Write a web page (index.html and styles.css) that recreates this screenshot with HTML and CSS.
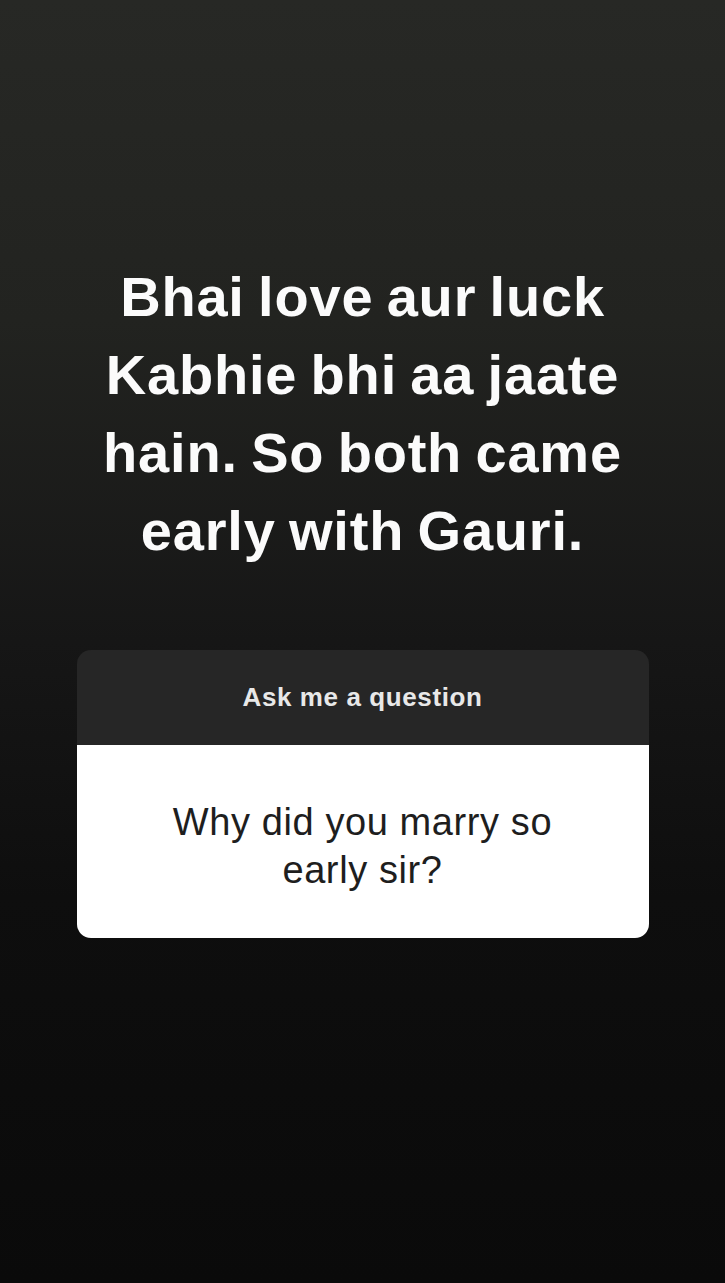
FILE: index.html
```html
<!DOCTYPE html>
<html lang="en">
<head>
  <meta charset="UTF-8" />
  <meta name="viewport" content="width=device-width, initial-scale=1" />
  <title>Story - Ask me a question</title>
  <link rel="stylesheet" href="styles.css">
</head>
<body>
  <main class="story">
    <p class="reply">Bhai love aur luck<br>Kabhie bhi aa jaate<br>hain. So both came<br>early with Gauri.</p>

    <section class="question-card" aria-label="Question sticker">
      <div class="question-head">Ask me a question</div>
      <div class="question-body">Why did you marry so<br>early sir?</div>
    </section>
  </main>
</body>
</html>
```

FILE: styles.css
```css
* {
  margin: 0;
  padding: 0;
  box-sizing: border-box;
}

html, body {
  width: 725px;
  height: 1283px;
  overflow: hidden;
}

body {
  font-family: 'Liberation Sans', Arial, sans-serif;
  background: linear-gradient(180deg, #272825 0%, #222320 25%, #161616 50%, #0e0e0e 70%, #0a0a0a 100%);
  color: #fff;
}

.story {
  display: flex;
  flex-direction: column;
  align-items: center;
  padding-top: 258px;
  height: 100%;
}

.reply {
  font-weight: bold;
  font-size: 56px;
  line-height: 78px;
  letter-spacing: 0.8px;
  word-spacing: -3px;
  text-align: center;
  color: #fbfbfb;
}

.question-card {
  margin-top: 80px;
  width: 572px;
  border-radius: 14px;
  overflow: hidden;
}

.question-head {
  background-color: #262626;
  height: 95px;
  display: flex;
  align-items: center;
  justify-content: center;
  font-weight: bold;
  font-size: 26px;
  letter-spacing: 0.6px;
  color: #e8e8e8;
}

.question-body {
  background-color: #fff;
  height: 193px;
  display: flex;
  align-items: center;
  justify-content: center;
  text-align: center;
  font-size: 38px;
  line-height: 48px;
  letter-spacing: 0.6px;
  color: #1e1e1e;
  padding-top: 8px;
}
```
